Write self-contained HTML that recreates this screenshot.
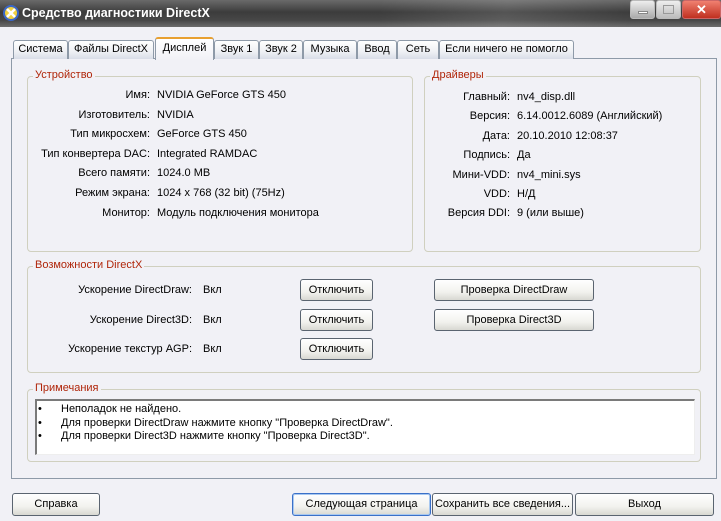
<!DOCTYPE html>
<html><head><meta charset="utf-8"><style>
*{box-sizing:border-box;margin:0;padding:0}
body{width:721px;height:521px;overflow:hidden;background:#f1f1f6;font-family:"Liberation Sans",sans-serif;font-size:11px;color:#000;position:relative}
.a{position:absolute;white-space:nowrap}
#tb{left:0;top:0;width:721px;height:27px;background:linear-gradient(#6a6a6a,#3c3c3c 45%,#474747 75%,#6c6c6c);}
.tab{position:absolute;top:40px;height:19px;border:1px solid #8e9aa8;border-bottom:none;border-radius:3px 3px 0 0;background:linear-gradient(#fff,#eef0f4 60%,#d8dde7);text-align:center;line-height:17px;font-size:11px}
.gb{position:absolute;border:1px solid #d0d0bf;border-radius:4px}
.gl{position:absolute;background:#f1f1f6;color:#b0260a;padding:0 2px;top:-8px;left:5px;font-size:11px}
.r{position:absolute;text-align:right;white-space:nowrap}
.btn{position:absolute;height:22px;border:1px solid #5a6470;border-radius:3px;background:linear-gradient(#fff,#f2f2ee 60%,#d8d8d2);text-align:center;line-height:20px;font-size:11px}
</style></head><body>
<div class="a" id="tb"></div>
<div class="a" style="left:380px;top:0;width:250px;height:27px;background:linear-gradient(100deg,rgba(255,255,255,0) 0%,rgba(255,255,255,.12) 50%,rgba(255,255,255,0) 100%)"></div>
<svg class="a" style="left:2px;top:4px" width="18" height="18"><circle cx="9" cy="9" r="8" fill="#3a66c8"/><circle cx="9" cy="9" r="6" fill="#f0d040"/><path d="M5 5L13 13M13 5L5 13" stroke="#fff" stroke-width="2.5"/></svg>
<div class="a" style="left:22px;top:6px;color:#fff;font-weight:bold;font-size:12.5px">Средство диагностики DirectX</div>
<div class="a" style="left:630px;top:0;width:25px;height:19px;border:1px solid #bbb;border-radius:3px;background:linear-gradient(#eee,#aaa)"><div class="a" style="left:7px;top:10px;width:10px;height:3px;background:#fff;border:1px solid #888"></div></div>
<div class="a" style="left:656px;top:0;width:25px;height:19px;border:1px solid #bbb;border-radius:3px;background:linear-gradient(#eee,#bbb)"><div class="a" style="left:6px;top:4px;width:11px;height:9px;border:1px solid #999"></div></div>
<div class="a" style="left:682px;top:0;width:39px;height:19px;border:1px solid #c66;border-radius:3px;background:linear-gradient(#f08070,#c03020);color:#fff;font-weight:bold;font-size:13px;text-align:center;line-height:17px">✕</div>

<div class="a" style="left:11px;top:58px;width:706px;height:421px;border:1px solid #8e9aa8;background:#f1f1f6"></div>
<div class="tab" style="left:13px;width:55px">Система</div>
<div class="tab" style="left:68px;width:86px">Файлы DirectX</div>
<div class="tab" style="left:214px;width:45px">Звук 1</div>
<div class="tab" style="left:259px;width:44px">Звук 2</div>
<div class="tab" style="left:303px;width:54px">Музыка</div>
<div class="tab" style="left:357px;width:40px">Ввод</div>
<div class="tab" style="left:397px;width:42px">Сеть</div>
<div class="tab" style="left:439px;width:135px">Если ничего не помогло</div>
<div class="tab" style="left:155px;top:37px;width:59px;height:23px;background:linear-gradient(#fff,#f1f1f6);border-top:2px solid #e8a030;line-height:18px">Дисплей</div>

<div class="gb" style="left:27px;top:76px;width:386px;height:176px"><div class="gl">Устройство</div></div>
<div class="r" style="left:20px;width:130px;top:86px;line-height:19.6px">Имя:<br>Изготовитель:<br>Тип микросхем:<br>Тип конвертера DAC:<br>Всего памяти:<br>Режим экрана:<br>Монитор:</div>
<div class="a" style="left:157px;top:86px;line-height:19.6px">NVIDIA GeForce GTS 450<br>NVIDIA<br>GeForce GTS 450<br>Integrated RAMDAC<br>1024.0 MB<br>1024 x 768 (32 bit) (75Hz)<br>Модуль подключения монитора</div>

<div class="gb" style="left:424px;top:76px;width:277px;height:176px"><div class="gl">Драйверы</div></div>
<div class="r" style="left:420px;width:90px;top:88px;line-height:19.4px">Главный:<br>Версия:<br>Дата:<br>Подпись:<br>Мини-VDD:<br>VDD:<br>Версия DDI:</div>
<div class="a" style="left:517px;top:88px;line-height:19.4px">nv4_disp.dll<br>6.14.0012.6089 (Английский)<br>20.10.2010 12:08:37<br>Да<br>nv4_mini.sys<br>Н/Д<br>9 (или выше)</div>

<div class="gb" style="left:27px;top:266px;width:674px;height:107px"><div class="gl">Возможности DirectX</div></div>
<div class="r" style="left:40px;width:152px;top:284px">Ускорение DirectDraw:</div>
<div class="r" style="left:40px;width:152px;top:314px">Ускорение Direct3D:</div>
<div class="r" style="left:40px;width:152px;top:343px">Ускорение текстур AGP:</div>
<div class="a" style="left:203px;top:284px">Вкл</div>
<div class="a" style="left:203px;top:314px">Вкл</div>
<div class="a" style="left:203px;top:343px">Вкл</div>
<div class="btn" style="left:300px;top:279px;width:73px">Отключить</div>
<div class="btn" style="left:300px;top:309px;width:73px">Отключить</div>
<div class="btn" style="left:300px;top:338px;width:73px">Отключить</div>
<div class="btn" style="left:434px;top:279px;width:160px">Проверка DirectDraw</div>
<div class="btn" style="left:434px;top:309px;width:160px">Проверка Direct3D</div>

<div class="gb" style="left:27px;top:389px;width:674px;height:73px"><div class="gl">Примечания</div></div>
<div class="a" style="left:35px;top:399px;width:660px;height:56px;background:#fff;border:1px solid #7a7a7a;border-right-color:#eee;border-bottom-color:#eee;border-left-width:2px;border-top-width:2px"></div>
<div class="a" style="left:38px;top:403px;line-height:13.5px">•<br>•<br>•</div>
<div class="a" style="left:61px;top:403px;line-height:13.5px">Неполадок не найдено.<br>Для проверки DirectDraw нажмите кнопку "Проверка DirectDraw".<br>Для проверки Direct3D нажмите кнопку "Проверка Direct3D".</div>

<div class="btn" style="left:12px;top:493px;width:88px;height:23px">Справка</div>
<div class="btn" style="left:292px;top:493px;width:139px;height:23px;border-color:#3a70c8;box-shadow:inset 0 0 0 1px #a8c8f0">Следующая страница</div>
<div class="btn" style="left:432px;top:493px;width:141px;height:23px">Сохранить все сведения...</div>
<div class="btn" style="left:575px;top:493px;width:139px;height:23px">Выход</div>
</body></html>
